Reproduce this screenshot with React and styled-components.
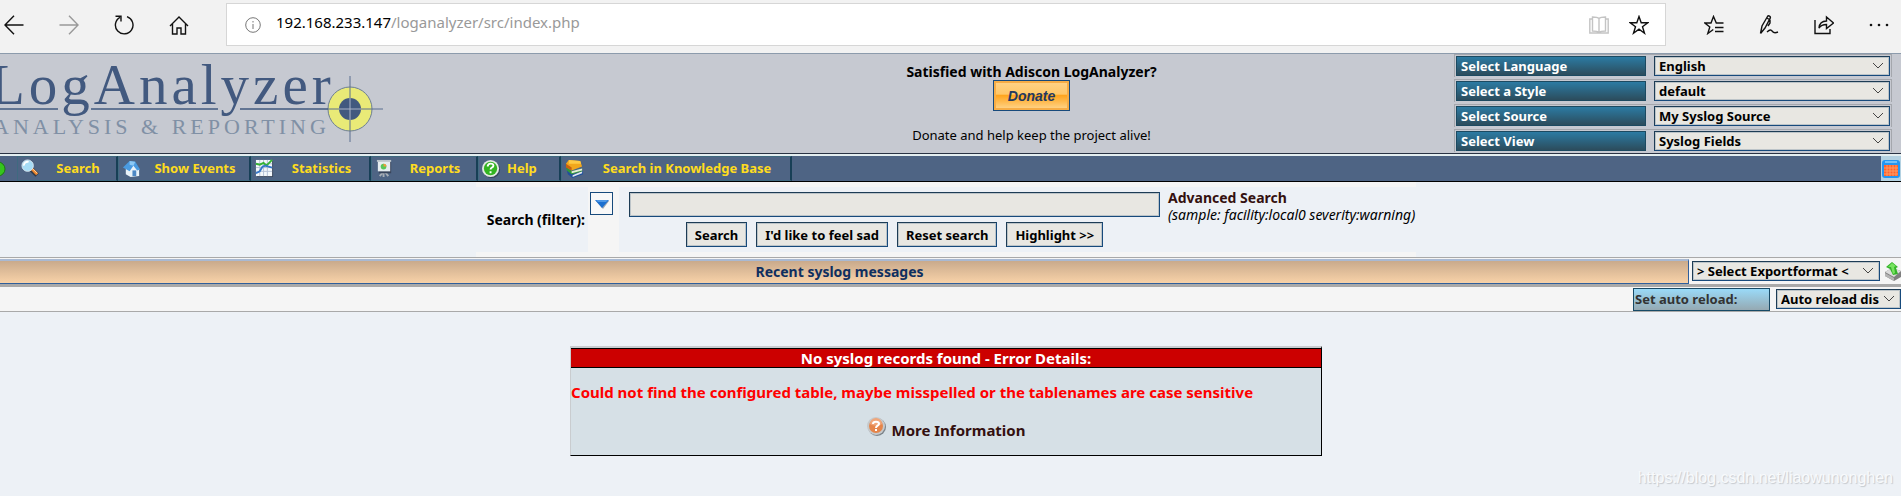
import { useId } from "react";
import styled, { createGlobalStyle, css } from "styled-components";

const GlobalStyle = createGlobalStyle`
  * {
    box-sizing: border-box;
  }
  body {
    margin: 0;
    background: #edf1f6;
    color: #000000;
    font-family: "Noto Sans", sans-serif;
    font-size: 14px;
    line-height: 20px;
  }
  a {
    text-decoration: none;
  }
`;

const MENU = [
  { label: "Search", icon: SearchIcon, width: 101 },
  { label: "Show Events", icon: HouseIcon, width: 133 },
  { label: "Statistics", icon: ChartIcon, width: 120 },
  { label: "Reports", icon: BoardIcon, width: 107 },
  { label: "Help", icon: HelpIcon, width: 83, tight: true },
  { label: "Search in Knowledge Base", icon: BooksIcon, width: 231 },
];

const SETTINGS = [
  { label: "Select Language", value: "English" },
  { label: "Select a Style", value: "default" },
  { label: "Select Source", value: "My Syslog Source" },
  { label: "Select View", value: "Syslog Fields" },
];

export default function App() {
  return (
    <Page>
      <GlobalStyle />
      <BrowserBar />
      <Header />
      <Menu />
      <Centered>
        <SearchPanel />
      </Centered>
      <Messages />
      <Centered>
        <ErrorDetails />
      </Centered>
      <Watermark>https://blog.csdn.net/liaowunonghen</Watermark>
    </Page>
  );
}

function BrowserBar() {
  return (
    <StyledBrowserBar>
      <NavButtons>
        <IconButton aria-label="Back">
          <LineIcon viewBox="0 0 20 20">
            <path d="M19.500 10H1M10 .8 1 10l9 9.200" />
          </LineIcon>
        </IconButton>
        <IconButton aria-label="Forward" $muted>
          <LineIcon viewBox="0 0 20 20">
            <path d="M.5 10H19M10 .8l9 9.200-9 9.200" />
          </LineIcon>
        </IconButton>
        <IconButton aria-label="Refresh">
          <LineIcon viewBox="0 0 20 20">
            <path d="M6 2.300A8.800 8.800 0 1 0 13 1.700M1.500 1.200H7V6.500" />
          </LineIcon>
        </IconButton>
        <IconButton aria-label="Home">
          <LineIcon viewBox="0 0 20 20">
            <path d="M1 11 10 2l9 9M3.500 9v10H8v-6h4v6h4.500V9" />
          </LineIcon>
        </IconButton>
      </NavButtons>
      <AddressBox>
        <InfoIcon viewBox="0 0 16 16">
          <circle cx="8" cy="8" r="7.300" />
          <path d="M8 7v5M8 4v1.500" />
        </InfoIcon>
        <Address>
          192.168.233.147<span>/loganalyzer/src/index.php</span>
        </Address>
        <IconButton aria-label="Reading view" $faint>
          <LineIcon viewBox="0 0 20 20">
            <path d="M10 3.500C8.500 2 6 2 3.500 2v14c2.500 0 5 0 6.500 1.500 1.500-1.500 4-1.500 6.500-1.500V2C14 2 11.500 2 10 3.500v14M3.500 4H.8v14h18.400V4h-2.700" />
          </LineIcon>
        </IconButton>
        <IconButton aria-label="Add to favorites">
          <LineIcon viewBox="0 0 20 20">
            <path d="m10 1.500 2.200 6.200h6.600l-5.300 4 2 6.500-5.500-4-5.500 4 2-6.500-5.300-4h6.600z" />
          </LineIcon>
        </IconButton>
      </AddressBox>
      <ToolButtons>
        <IconButton aria-label="Favorites">
          <LineIcon viewBox="0 0 20 20">
            <path d="M19.500 8h-7.200L9.500 1.500 7 8H.8l5 4-2 6.500 5.500-4M11 12.500h8.500M11 16.500h8.500" />
          </LineIcon>
        </IconButton>
        <IconButton aria-label="Notes">
          <LineIcon viewBox="0 0 20 20">
            <path d="M1.500 18.500 3 11 8.500 1.500c1-1.500 3.500 0 2.700 1.700L6 13l-4.500 5.500M8 3l3 2v3l-2 3M8 17c3-2.500 4-2.500 5.500-.5s3 1.500 5.500.5" />
          </LineIcon>
        </IconButton>
        <IconButton aria-label="Share">
          <LineIcon viewBox="0 0 20 20">
            <path d="M1 5v13.500h15V14M5 13c.5-5 3-7 7.500-7V2l7 6-7 5.500V9.500C9.500 9.500 7 10 5 13z" />
          </LineIcon>
        </IconButton>
        <IconButton aria-label="More">
          <DotsIcon viewBox="0 0 20 20">
            <circle cx="2" cy="10" r="1.300" />
            <circle cx="10" cy="10" r="1.300" />
            <circle cx="18" cy="10" r="1.300" />
          </DotsIcon>
        </IconButton>
      </ToolButtons>
    </StyledBrowserBar>
  );
}

function Header() {
  return (
    <StyledHeader>
      <Logo />
      <Donate>
        <strong>Satisfied with Adiscon LogAnalyzer?</strong>
        <DonateButton>Donate</DonateButton>
        <DonateText>Donate and help keep the project alive!</DonateText>
      </Donate>
      <Settings>
        {SETTINGS.map(({ label, value }) => (
          <Setting key={label} label={label} value={value} />
        ))}
      </Settings>
    </StyledHeader>
  );
}

function Setting({ label, value }) {
  const id = useId();
  return (
    <SettingRow>
      <SettingLabel htmlFor={id}>{label}</SettingLabel>
      <Dropdown id={id} value={value} />
    </SettingRow>
  );
}

function Dropdown({ id, value, label }) {
  return (
    <DropdownBox>
      <Select id={id} aria-label={label}>
        <option>{value}</option>
      </Select>
      <Chevron viewBox="0 0 12 8">
        <path d="m1 1 5 5 5-5" />
      </Chevron>
    </DropdownBox>
  );
}

function Logo() {
  return (
    <StyledLogo viewBox="0 0 390 96">
      <LogoName x="-10" y="50">
        LogAnalyzer
      </LogoName>
      <LogoTagline x="-7" y="80">
        ANALYSIS &amp; REPORTING
      </LogoTagline>
      <circle cx="350" cy="55" r="22" fill="#e9ea77" stroke="#6d7f94" />
      <circle cx="350" cy="55" r="11" fill="#42597f" />
      <path
        d="M0 55h58M91 55h127M240 55h88"
        stroke="#42597f"
        strokeWidth="1.300"
      />
      <path d="M328 55h11M361 55h22M350 22v22M350 66v22" stroke="#5b6f90" />
      <path d="M339 55h22M350 44v22" stroke="#a9b3c8" />
    </StyledLogo>
  );
}

function Menu() {
  return (
    <StyledMenu>
      <MenuStart href="#home" aria-label="Home">
        <svg width="6" height="16" viewBox="10 0 6 16">
          <circle cx="8" cy="8" r="7" fill="#35c51e" stroke="#1d7a10" />
        </svg>
      </MenuStart>
      {MENU.map(({ label, icon: Icon, width, tight }) => (
        <MenuItem key={label} href="#menu" $width={width}>
          <Icon />
          <MenuText $tight={tight}>{label}</MenuText>
        </MenuItem>
      ))}
      <CalendarButton aria-label="Calendar">
        <CalendarIcon />
      </CalendarButton>
    </StyledMenu>
  );
}

function SearchPanel() {
  return (
    <SearchTable>
      <FilterLabel htmlFor="filter">Search (filter):</FilterLabel>
      <ToggleCell>
        <ToggleButton aria-label="Predefined searches">
          <svg width="14" height="10" viewBox="0 0 14 10">
            <path d="M1 2h13L8 10z" fill="#9aa4b0" />
            <path d="M0 1h14L7 9z" fill="#1b6fd0" />
            <path d="M1 1h12l-2 2H3z" fill="#4d97e6" />
          </svg>
        </ToggleButton>
      </ToggleCell>
      <SearchCell>
        <SearchForm>
          <SearchInput id="filter" type="text" />
          <SearchButtons>
            <Button>Search</Button>
            <Button>I'd like to feel sad</Button>
            <Button>Reset search</Button>
            <Button>Highlight &gt;&gt;</Button>
          </SearchButtons>
        </SearchForm>
        <Advanced>
          <DarkLink href="#advanced">Advanced Search</DarkLink>
          <em>(sample: facility:local0 severity:warning)</em>
        </Advanced>
      </SearchCell>
    </SearchTable>
  );
}

function Messages() {
  return (
    <section>
      <MessagesRow>
        <MessagesTitle>Recent syslog messages</MessagesTitle>
        <ExportCell>
          <Dropdown label="Export format" value="> Select Exportformat <" />
        </ExportCell>
        <ExportButton aria-label="Export">
          <ExportIcon />
        </ExportButton>
      </MessagesRow>
      <ReloadRow>
        <ReloadLabel htmlFor="reload">Set auto reload:</ReloadLabel>
        <ReloadCell>
          <Dropdown id="reload" value="Auto reload dis" />
        </ReloadCell>
      </ReloadRow>
    </section>
  );
}

function ErrorDetails() {
  return (
    <ErrorPanel>
      <ErrorTitle>No syslog records found - Error Details:</ErrorTitle>
      <ErrorText>
        Could not find the configured table, maybe misspelled or the tablenames
        are case sensitive
      </ErrorText>
      <MoreInformation>
        <QuestionIcon />
        <DarkLink href="#more">More Information</DarkLink>
      </MoreInformation>
    </ErrorPanel>
  );
}

function SearchIcon() {
  return (
    <MenuIcon viewBox="0 0 20 20">
      <path d="m11 11 6 6" stroke="#333a48" strokeWidth="5" />
      <path d="m11 10 6 6" stroke="#f0862c" strokeWidth="3" />
      <path d="m12 10 5 5" stroke="#ffd9a8" strokeWidth="1" />
      <circle cx="7" cy="7" r="6" fill="#a6dcf5" stroke="#d6e6ef" />
      <path d="M3 7a4 4 0 0 1 5-4" stroke="#ffffff" strokeWidth="2" fill="none" />
    </MenuIcon>
  );
}

function HouseIcon() {
  return (
    <MenuIcon viewBox="0 0 20 20">
      <path d="m4 9 8-4 6 6v7l-9 1-5-3z" fill="#e9f1f8" />
      <path d="M1 9 8 2l6 1 5 8-3 1-4-5-4 6z" fill="#4a9ae0" />
      <path d="m8 2 6 1-2 4-4-1z" fill="#8bc8f5" />
      <path d="M11 12h4v6h-4z" fill="#4d87c4" />
    </MenuIcon>
  );
}

function ChartIcon() {
  return (
    <MenuIcon viewBox="0 0 20 20">
      <path d="M2 2h17v17H2z" fill="#3b465c" />
      <path d="M1 1h17v17H1z" fill="#f4f8fb" />
      <path
        d="M1 5h17M1 9h17M1 13h17M5 1v17M9 1v17M13 1v17"
        stroke="#b4c0d6"
        strokeWidth="1"
      />
      <path d="m1 5 4 1 4-2 3 3 6-6" stroke="#35b335" strokeWidth="2" fill="none" />
      <path d="m1 15 4-2 3-5 3-1 7 2" stroke="#3577c9" strokeWidth="2" fill="none" />
    </MenuIcon>
  );
}

function BoardIcon() {
  return (
    <MenuIcon viewBox="0 0 20 20">
      <path d="m9 13-4 5m5-5 4 5m-5-5v6" stroke="#a7adb5" strokeWidth="2" />
      <path d="M4 3h13v12H4z" fill="#38445b" />
      <path d="M3 2h13v11H3z" fill="#e7edf0" />
      <path d="M2 1h15v2H2z" fill="#bdc6cc" />
      <circle cx="9" cy="8" r="3" fill="#58c85a" />
      <path d="M9 8V5a3 3 0 0 1 3 3z" fill="#f39a3c" />
    </MenuIcon>
  );
}

function HelpIcon() {
  return (
    <MenuIcon viewBox="0 0 20 20">
      <circle cx="10" cy="11" r="9" fill="#36425a" />
      <circle cx="9" cy="10" r="9" fill="#e2e8e2" />
      <circle cx="9" cy="10" r="7" fill="#33b421" />
      <path
        d="M6 8c0-4 6-4 6-1 0 2-3 2-3 4m0 2v2"
        stroke="#ffffff"
        strokeWidth="2"
        fill="none"
      />
    </MenuIcon>
  );
}

function BooksIcon() {
  return (
    <MenuIcon viewBox="0 0 20 20">
      <path d="m2 12 1 4 5 4 11-4v-3L8 16z" fill="#1f4f9c" />
      <path d="m8 17 10-4v2L8 19z" fill="#dfe6ee" />
      <path d="m1 8 1 4 5 4 11-3v-3L7 13z" fill="#2f9a35" />
      <path d="m7 13 11-3v2L7 15z" fill="#e4ecd8" />
      <path d="m1 5 3-4 12 1 2 6-11 4-5-3z" fill="#f2a71b" />
      <path d="m4 1 12 1 1 3L4 5z" fill="#ffca45" />
      <path d="m1 5 6 4v3L1 9z" fill="#c9610f" />
    </MenuIcon>
  );
}

function CalendarIcon() {
  return (
    <svg width="18" height="18" viewBox="0 0 18 18">
      <rect width="18" height="18" rx="3" fill="#2496f2" />
      <path d="M3 1h12v2H3z" fill="#72c1fa" />
      <path d="M2 5h14v11H2z" fill="#ff622d" />
      <path
        d="M2 8h14M2 11h14M2 14h14M5 5v11M8 5v11M11 5v11M14 5v11"
        stroke="#ff9a63"
        strokeWidth="1"
      />
    </svg>
  );
}

function ExportIcon() {
  return (
    <svg width="16" height="20" viewBox="0 0 16 20">
      <path d="m0 11 7-4 9 3v6l-7 4-9-5z" fill="#7f7f7f" />
      <path d="m0 11 7-4 9 3-7 6z" fill="#dcdcdc" />
      <path d="m0 12 9 5v3l-9-5z" fill="#b4b4b4" />
      <path d="m1 6 6-5 6 5-2 1 2 6-5 1-3-6z" fill="#35b42a" />
      <path d="m3 6 4-4 4 3-2 1 1 6-2 1-2-7z" fill="#77e35f" />
    </svg>
  );
}

function QuestionIcon() {
  return (
    <svg width="20" height="20" viewBox="0 0 20 20">
      <circle cx="10" cy="10" r="9" fill="#7d858b" />
      <circle cx="9" cy="9" r="9" fill="#c6c9cb" />
      <circle cx="9" cy="9" r="7" fill="#e5854a" />
      <path d="M3 7a6 6 0 0 1 12 0c-3 2-9 2-12 0z" fill="#f0a67a" />
      <path
        d="M6 7c0-3 6-3 6 0 0 2-3 1-3 4m0 1v2"
        stroke="#ffffff"
        strokeWidth="2"
        fill="none"
      />
    </svg>
  );
}

const raised = css`
  border: 1px solid #174a7c;
  border-top-color: #1d3c55;
  border-left-color: #1d3c55;
  background: #e8e7e2;
  box-shadow: inset 0 0 0 1px #bcc4c8;
`;

const Page = styled.main`
  display: flex;
  flex-direction: column;
  min-height: 100vh;
`;

const Centered = styled.div`
  display: flex;
  justify-content: center;
  padding-right: 9px;
`;

const StyledBrowserBar = styled.div`
  display: flex;
  align-items: center;
  height: 53px;
  padding-bottom: 4px;
  background: #f2f2f2;
`;

const NavButtons = styled.div`
  display: flex;
  gap: 35px;
  width: 226px;
  padding-left: 4px;
`;

const ToolButtons = styled.div`
  display: flex;
  justify-content: space-between;
  width: 235px;
  padding: 0 12px 0 38px;
`;

const IconButton = styled.button`
  display: flex;
  padding: 0;
  border: 0;
  background: none;
  color: ${({ $muted, $faint }) =>
    $faint ? "#c4c4c4" : $muted ? "#999999" : "#111111"};
`;

const LineIcon = styled.svg`
  width: 20px;
  height: 20px;
  fill: none;
  stroke: currentColor;
  stroke-width: 1.4;
`;

const DotsIcon = styled.svg`
  width: 20px;
  height: 20px;
  fill: currentColor;
`;

const AddressBox = styled.div`
  display: flex;
  flex: 1;
  align-items: center;
  gap: 20px;
  height: 43px;
  padding: 0 16px 0 18px;
  border: 1px solid #d6d6d6;
  background: #ffffff;
`;

const InfoIcon = styled.svg`
  width: 16px;
  height: 16px;
  margin-right: -5px;
  fill: none;
  stroke: #777777;
`;

const Address = styled.span`
  flex: 1;
  padding-bottom: 6px;
  font-size: 15px;

  span {
    color: #999999;
  }
`;

const StyledHeader = styled.header`
  display: flex;
  height: 101px;
  border-top: 1px solid #8c9bac;
  border-bottom: 1px solid #2a3344;
  background: #c6c9d1;
`;

const StyledLogo = styled.svg`
  width: 390px;
  height: 96px;
  fill: none;
`;

const LogoName = styled.text`
  fill: #42597f;
  font-family: "Liberation Serif", serif;
  font-size: 57px;
  letter-spacing: 4px;
`;

const LogoTagline = styled.text`
  fill: #8090a5;
  font-family: "Liberation Serif", serif;
  font-size: 22px;
  letter-spacing: 4px;
`;

const Donate = styled.div`
  display: flex;
  flex: 1;
  flex-direction: column;
  align-items: center;
  padding: 9px 0 0 219px;
  line-height: 17px;
`;

const DonateText = styled.span`
  font-size: 13px;
`;

const DonateButton = styled.button`
  width: 77px;
  height: 31px;
  margin-bottom: 16px;
  padding: 0;
  border: 1px solid #174a7c;
  background: linear-gradient(#ffd48a, #ffc768 45%, #ffa51e 50%, #ffd892);
  box-shadow: inset 0 0 0 2px #f7ad46;
  color: #24385f;
  font: italic bold 14px "Liberation Sans", sans-serif;
`;

const Settings = styled.div`
  display: flex;
  flex-direction: column;
  gap: 2px;
  padding-right: 9px;
`;

const SettingRow = styled.div`
  display: flex;
  gap: 8px;
  width: 438px;
  padding: 1px;
  border: 1px solid #a4a7ad;
  border-bottom: 0;
`;

const SettingLabel = styled.label`
  width: 190px;
  padding-left: 4px;
  border: 1px solid #1c4a61;
  background: linear-gradient(#2c7ba3, #2c4c5c);
  color: #ffffff;
  font-size: 13px;
  font-weight: bold;
  line-height: 18px;
`;

const DropdownBox = styled.span`
  position: relative;
  display: flex;
  flex: 1;
  min-width: 0;
`;

const Select = styled.select`
  ${raised}
  width: 100%;
  height: 20px;
  padding: 0 20px 0 4px;
  border-radius: 0;
  appearance: none;
  color: #000000;
  font: bold 13px "Noto Sans", sans-serif;
`;

const Chevron = styled.svg`
  position: absolute;
  top: 6px;
  right: 6px;
  width: 12px;
  height: 8px;
  fill: none;
  stroke: #444444;
  pointer-events: none;
`;

const StyledMenu = styled.nav`
  display: flex;
  height: 28px;
  border-top: 2px solid #e4eef0;
  border-bottom: 1px solid #000000;
  background: #4e6484;
`;

const MenuStart = styled.a`
  display: flex;
  align-items: center;
  width: 17px;
`;

const MenuItem = styled.a`
  display: flex;
  align-items: center;
  width: ${({ $width }) => $width}px;
  padding-left: 3px;
  border: 1px solid #3f6a80;
  border-right: 2px solid #173f56;
  color: #ffdc1e;
  font-size: 13px;
  font-weight: bold;
`;

const MenuIcon = styled.svg`
  flex: none;
  width: 19px;
  height: 19px;
`;

const MenuText = styled.span`
  flex: 1;
  padding-bottom: 2px;
  padding-left: ${({ $tight }) => ($tight ? 6 : 0)}px;
  text-align: ${({ $tight }) => ($tight ? "left" : "center")};
`;

const CalendarButton = styled.button`
  display: flex;
  align-items: center;
  justify-content: center;
  width: 20px;
  margin-left: auto;
  padding: 0;
  border: 0;
  background: #b4d2e2;
`;

const SearchTable = styled.form`
  display: flex;
  width: 940px;
  height: 75px;
  padding: 5px 0;
  background: #f5f5f5;
`;

const FilterLabel = styled.label`
  display: flex;
  flex: none;
  align-items: center;
  justify-content: flex-end;
  width: 112px;
  padding-right: 3px;
  background: #edf1f6;
  font-weight: bold;
  white-space: nowrap;
`;

const ToggleCell = styled.div`
  flex: none;
  width: 31px;
  padding: 5px 2px;
`;

const ToggleButton = styled.button`
  display: flex;
  align-items: center;
  justify-content: center;
  width: 23px;
  height: 23px;
  padding: 0;
  border: 1px solid #174a7c;
  background: #f8f8f8;
`;

const SearchCell = styled.div`
  display: flex;
  flex: 1;
  gap: 8px;
  min-width: 0;
  padding: 5px 0 5px 10px;
  background: #edf1f6;
`;

const SearchForm = styled.div`
  flex: none;
  width: 531px;
`;

const SearchInput = styled.input`
  ${raised}
  display: block;
  width: 100%;
  height: 25px;
`;

const SearchButtons = styled.div`
  display: flex;
  justify-content: center;
  gap: 9px;
  margin-top: 5px;
`;

const Button = styled.button`
  ${raised}
  height: 25px;
  padding: 0 8px;
  font: bold 13px "Noto Sans", sans-serif;
  white-space: nowrap;
`;

const Advanced = styled.div`
  display: flex;
  flex-direction: column;
  line-height: 17px;
  margin-top: -3px;
  white-space: nowrap;
`;

const DarkLink = styled.a`
  color: #34100f;
  font-weight: bold;
`;

const MessagesRow = styled.div`
  display: flex;
  align-items: center;
  height: 27px;
  border-top: 1px solid #a9a9a9;
  background: #f5f5f5;
`;

const MessagesTitle = styled.h1`
  flex: 1;
  margin: 0;
  padding-right: 9px;
  border: 1px solid #2f5f9c;
  border-top: 2px solid #a9b9d2;
  border-left: 0;
  background: linear-gradient(#c9aa8c, #f8d2a8);
  color: #0f2f5f;
  font-size: 14px;
  line-height: 22px;
  text-align: center;
`;

const ExportCell = styled.div`
  display: flex;
  width: 191px;
  padding-left: 3px;
`;

const ExportButton = styled.button`
  display: flex;
  width: 21px;
  padding: 0 0 0 5px;
  border: 0;
  background: none;
`;

const ReloadRow = styled.div`
  display: flex;
  align-items: center;
  justify-content: flex-end;
  height: 28px;
  border-top: 3px solid #a9a9a9;
  border-bottom: 1px solid #a9a9a9;
  background: #f5f5f5;
`;

const ReloadLabel = styled.label`
  width: 137px;
  padding-left: 1px;
  border: 1px solid #174a66;
  background: linear-gradient(#9adaf8, #95a9b2);
  color: #333333;
  font-size: 13px;
  font-weight: bold;
  line-height: 21px;
`;

const ReloadCell = styled.div`
  display: flex;
  width: 131px;
  padding-left: 6px;
`;

const ErrorPanel = styled.section`
  width: 752px;
  margin-top: 34px;
  padding-bottom: 12px;
  border: 1px solid #000000;
  border-top: 2px solid #c9cccf;
  border-left-color: #c9cccf;
  background: #d6e0e6;
`;

const ErrorTitle = styled.h2`
  margin: 0;
  border: 1px solid #000000;
  border-width: 1px 0;
  background: #cc0000;
  color: #ffffff;
  font-size: 15px;
  line-height: 18px;
  text-align: center;
`;

const ErrorText = styled.p`
  margin: 14px 0 15px;
  color: #ff0000;
  font-size: 15px;
  font-weight: bold;
`;

const MoreInformation = styled.p`
  display: flex;
  justify-content: center;
  gap: 5px;
  margin: 0;
  font-size: 15px;
  line-height: 26px;
`;

const Watermark = styled.footer`
  margin: auto 8px 8px auto;
  color: #f8fafc;
  font-family: "Liberation Sans", sans-serif;
  font-size: 16px;
  text-shadow: 1px 1px 1px #c4c8cd;
`;
